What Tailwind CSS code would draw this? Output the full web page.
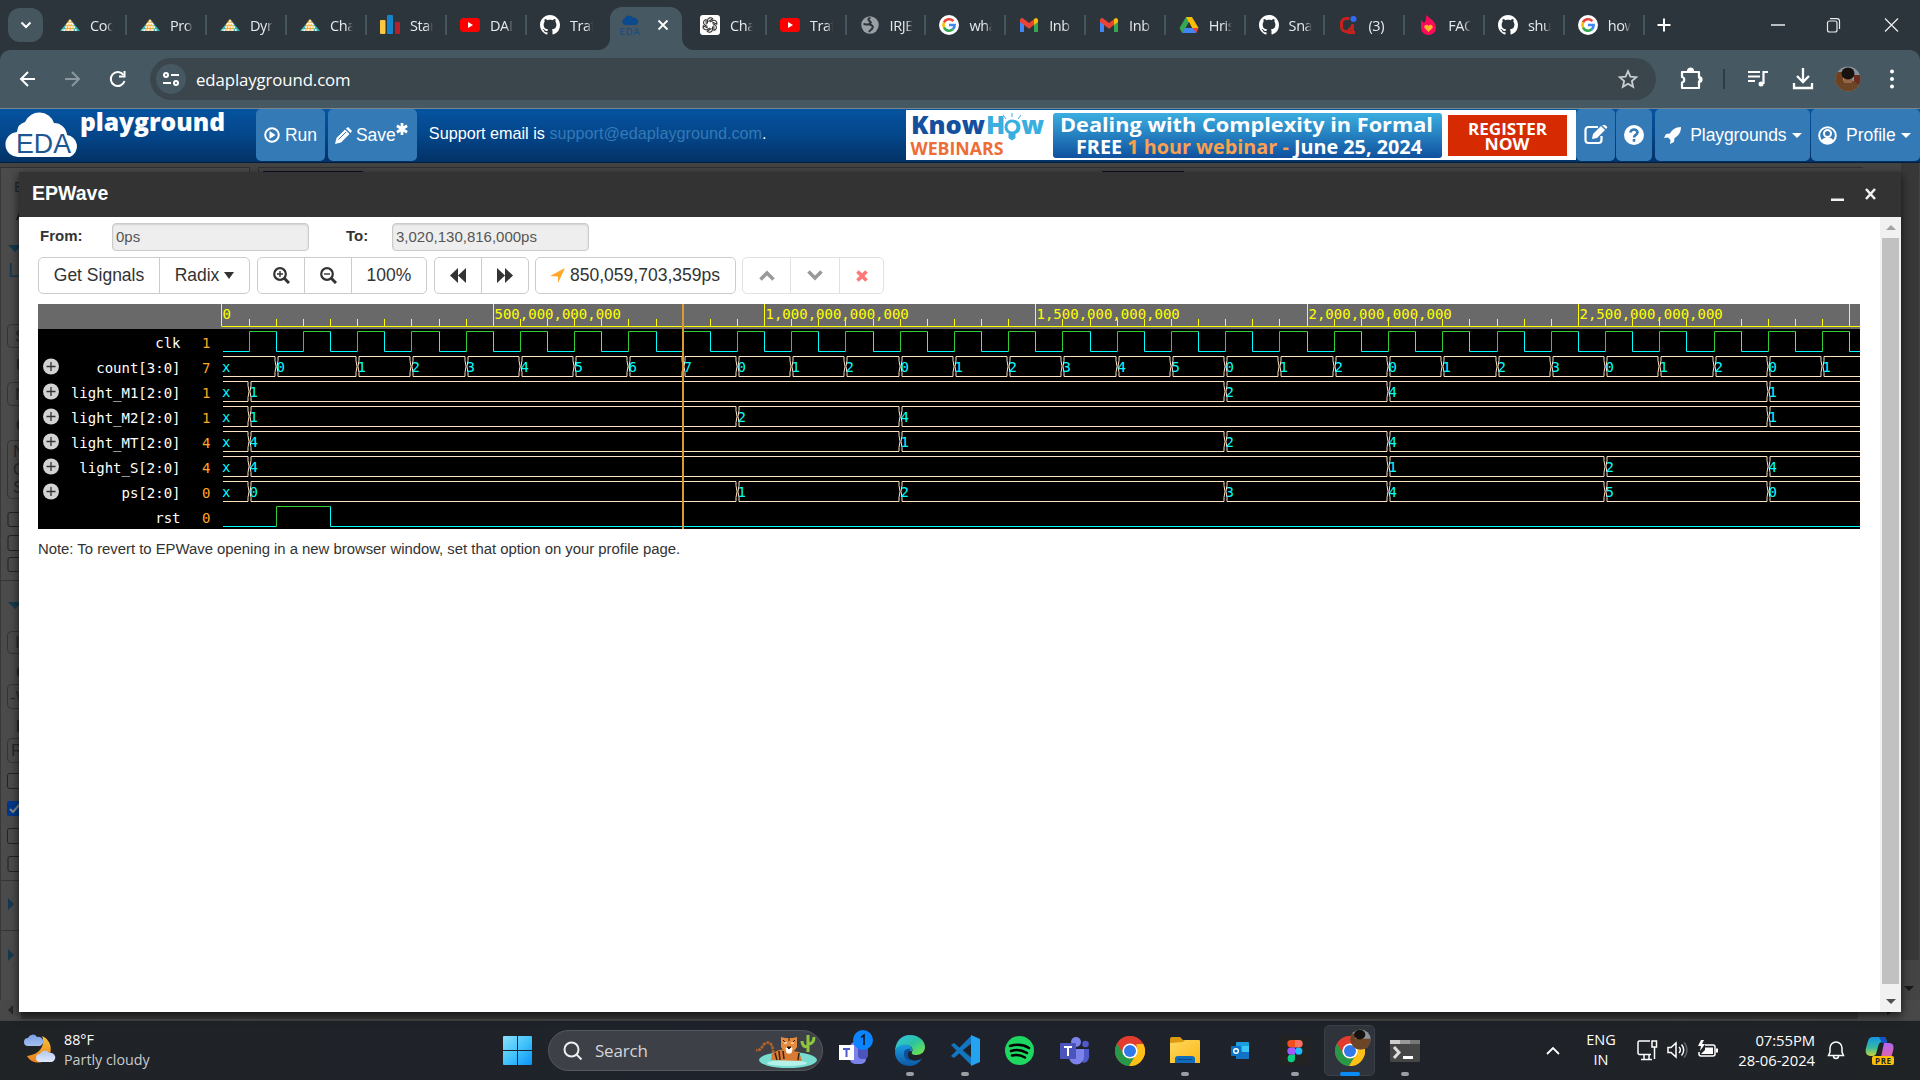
<!DOCTYPE html>
<html lang="en">
<head>
<meta charset="utf-8">
<title>EPWave - EDA Playground</title>
<script src="https://cdn.jsdelivr.net/npm/@tailwindcss/browser@4"></script>
</head>
<body class="w-[1920px] h-[1080px] overflow-hidden bg-[#444] font-['Liberation_Sans',Arial,sans-serif] flex flex-col">
<svg class="absolute" width="0" height="0">
  <defs>
    <linearGradient id="gEdge" x1="0" y1="0" x2="1" y2="1"><stop offset="0" stop-color="#35c1f1"/><stop offset=".5" stop-color="#2bc3a0"/><stop offset="1" stop-color="#7eea3c"/></linearGradient>
    <linearGradient id="gEdge2" x1="0" y1="0" x2="0" y2="1"><stop offset="0" stop-color="#1b9de2"/><stop offset="1" stop-color="#0c59a4"/></linearGradient>
    <linearGradient id="gWin" x1="0" y1="0" x2="1" y2="1"><stop offset="0" stop-color="#8be1fb"/><stop offset=".5" stop-color="#43c4fb"/><stop offset="1" stop-color="#0a93f8"/></linearGradient>
    <linearGradient id="gBan" x1="0" y1="0" x2="0" y2="1"><stop offset="0" stop-color="#3baee0"/><stop offset="1" stop-color="#0f519f"/></linearGradient>
    <linearGradient id="gMoon" x1="0" y1="0" x2="0" y2="1"><stop offset="0" stop-color="#f5c13a"/><stop offset="1" stop-color="#ef7f1a"/></linearGradient>
    <linearGradient id="gCloud" x1="0" y1="0" x2="0" y2="1"><stop offset="0" stop-color="#7ba0e6"/><stop offset="1" stop-color="#dde8fb"/></linearGradient>
    <linearGradient id="gFold" x1="0" y1="0" x2="1" y2="1"><stop offset="0" stop-color="#ffd75e"/><stop offset="1" stop-color="#fbb917"/></linearGradient>
    <linearGradient id="gCop1" x1="0" y1="0" x2="0" y2="1"><stop offset="0" stop-color="#1496e8"/><stop offset=".55" stop-color="#35b8a0"/><stop offset="1" stop-color="#c8d53a"/></linearGradient>
    <linearGradient id="gCop2" x1="0" y1="0" x2="0" y2="1"><stop offset="0" stop-color="#b366f0"/><stop offset="1" stop-color="#f0648c"/></linearGradient>
    <clipPath id="av"><circle cx="13" cy="13" r="12.500"/></clipPath>
    <symbol id="tri" viewBox="0 0 20 20"><path d="M10 4 L20 16 H0Z" fill="#35b8b0"/><path d="M10 4 L14 9 V16 H6 V9Z" fill="#f5b041"/><path d="M2 15h16M5 12h10M7.500 8.500h5M4 16l4-8M8 16l2-11M12 16l-2-11M16 16l-4-8" stroke="#fff" stroke-width="1.200" stroke-dasharray="2 1.200" fill="none"/></symbol>
    <symbol id="bars" viewBox="0 0 20 20"><rect x="0" y="5" width="5.500" height="14" rx="1" fill="#fbc740"/><rect x="7" y="0" width="6" height="19" rx="1" fill="#1684c9"/><rect x="15" y="7" width="5" height="12" rx="1" fill="#b51f2e"/></symbol>
    <symbol id="yt" viewBox="0 0 20 20"><rect y="3" width="20" height="14" rx="3.500" fill="#f00"/><path d="M8 7l5 3-5 3z" fill="#fff"/></symbol>
    <symbol id="gh" viewBox="0 0 16 16"><path fill="#fff" d="M8 0C3.580 0 0 3.580 0 8c0 3.540 2.290 6.530 5.470 7.590.4.070.55-.17.55-.38 0-.19-.01-.82-.01-1.490-2.010.37-2.530-.49-2.690-.94-.09-.23-.48-.94-.82-1.130-.28-.15-.68-.52-.01-.53.63-.01 1.080.58 1.230.82.72 1.210 1.870.87 2.330.66.07-.52.28-.87.51-1.070-1.780-.2-3.640-.89-3.640-3.950 0-.87.31-1.590.82-2.150-.08-.2-.36-1.020.08-2.120 0 0 .67-.21 2.200.82.64-.18 1.320-.27 2-.27s1.360.09 2 .27c1.530-1.040 2.200-.82 2.200-.82.44 1.100.16 1.920.08 2.120.51.56.82 1.270.82 2.150 0 3.070-1.870 3.750-3.650 3.950.29.25.54.73.54 1.480 0 1.070-.01 1.930-.01 2.200 0 .21.15.46.55.38A8.010 8.010 0 0 0 16 8c0-4.420-3.580-8-8-8z"/></symbol>
    <symbol id="eda" viewBox="0 0 20 20"><path d="M5 10a3.500 3.500 0 0 1 0-6.500A5 5 0 0 1 14 3a3.600 3.600 0 0 1 2 7z" fill="#0b4a8c"/><text x="0" y="19.500" font-size="9.500" fill="#0b4a8c" textLength="20">EDA</text></symbol>
    <symbol id="gpt" viewBox="0 0 20 20"><rect width="20" height="20" rx="3" fill="#fff"/><g fill="none" stroke="#333" stroke-width="1.100"><path id="pt" d="M7.500 8.500V5.500a3 3 0 0 1 5.300-1.700L8.500 6.500"/><use href="#pt" transform="rotate(60 10 10)"/><use href="#pt" transform="rotate(120 10 10)"/><use href="#pt" transform="rotate(180 10 10)"/><use href="#pt" transform="rotate(240 10 10)"/><use href="#pt" transform="rotate(300 10 10)"/></g></symbol>
    <symbol id="globe" viewBox="0 0 20 20"><circle cx="10" cy="10" r="8.700" fill="#9aa0a6"/><path d="M10.500 3c-3 .5-2.500 2.500-.5 3.500s0 2.500-2 3-3-.5-4.500-.5M9 9.500c3 .5 4.500 1.500 3.500 3.500S10 15 9 17" stroke="#2c353b" stroke-width="2" fill="none"/></symbol>
    <symbol id="goog" viewBox="0 0 20 20"><circle cx="10" cy="10" r="10" fill="#fff"/><g fill="none" stroke-width="2.600"><path d="M14.300 6.100A5.600 5.600 0 0 0 5 7.500" stroke="#ea4335"/><path d="M5 7.500a5.600 5.600 0 0 0 0 5" stroke="#fbbc05"/><path d="M5 12.500a5.600 5.600 0 0 0 8.800 1.800" stroke="#34a853"/><path d="M13.800 14.300A5.600 5.600 0 0 0 15.600 10H10" stroke="#4285f4"/></g></symbol>
    <symbol id="gmail" viewBox="0 0 20 20"><path d="M1 5v12h4V8z" fill="#4285f4"/><path d="M19 5v12h-4V8z" fill="#34a853"/><path d="M15 4.500V10l4-3V5a2 2 0 0 0-3.200-1.500z" fill="#fbbc04"/><path d="M1 5a2 2 0 0 1 3.200-1.500L10 8l5-3.700V10l-5 3.700L1 7z" fill="#ea4335"/></symbol>
    <symbol id="drive" viewBox="0 0 20 20"><path d="M7 2h6l-7 12-3 4L.5 13z" fill="#34a853"/><path d="M7 2h6l6.500 11H13z" fill="#fbbc04"/><path d="M6 13h13.500L17 18H3z" fill="#4285f4"/><path d="M14 13h5.500L17 18z" fill="#ea4335"/><path d="M10 7l3 6H7z" fill="#2c353b"/></symbol>
    <symbol id="qi" viewBox="0 0 20 20"><path d="M11.500 3.500H8A4.500 4.500 0 0 0 3.500 8v4A4.500 4.500 0 0 0 8 16.500h1" fill="none" stroke="#c5221f" stroke-width="3"/><path d="M14.500 9v9M9 17.500h8M14 12l-4 4" stroke="#c5221f" stroke-width="2.800"/><circle cx="15.500" cy="4" r="3" fill="#2f6df6"/></symbol>
    <symbol id="flame" viewBox="0 0 20 20"><path d="M8 0c5 4 10 7 10 13a7.500 7 0 0 1-15 0V5l3 3c2-2 2.500-5 2-8z" fill="#fb0a5a"/><path d="M10.500 17l-4-4a2 2 0 0 1 4-2 2 2 0 0 1 4 2z" fill="#fbb52a"/></symbol>
    <symbol id="chrome" viewBox="0 0 30 30"><circle cx="15" cy="15" r="15" fill="#ea4335"/><path d="M2 7.500A15 15 0 0 0 14 30l7-11z" fill="#279847"/><path d="M28 7.500A15 15 0 0 1 14 30l7.500-12.500V7.500z" fill="#fcc016"/><path d="M2 7.500L8.500 18 15 8H28A15 15 0 0 0 2 7.500z" fill="#e33b2e"/><circle cx="15" cy="15" r="7.600" fill="#fff"/><circle cx="15" cy="15" r="6" fill="#3178e8"/></symbol>
  </defs>
</svg>

<header class="h-[50px] shrink-0 bg-[#2c353b] flex items-center font-['Open_Sans','Noto_Sans',sans-serif] text-[14.500px] text-[#e6eaed]">
  <div class="ml-2 w-[35px] h-[34px] rounded-xl bg-[#46565f] grid place-items-center mr-1"><svg width="12" height="8" viewBox="0 0 12 8"><path d="M1.500 1.500L6 6l4.500-4.500" stroke="#fff" stroke-width="2" fill="none"/></svg></div>
  <div id="tabsLeft" class="flex w-[563px] shrink-0"></div>
  <div class="relative w-[72px] h-[50px] shrink-0 pt-[7px]">
    <div class="h-[43px] rounded-t-xl bg-[#465862] flex items-center pl-[9px] pb-[7px]"><svg width="21" height="20"><use href="#eda"/></svg><svg class="ml-[17px]" width="12" height="12" viewBox="0 0 12 12"><path d="M1.500 1.500l9 9m0-9l-9 9" stroke="#fff" stroke-width="1.800"/></svg></div>
    <svg class="absolute -left-3 bottom-0" width="12" height="12"><path d="M0 12A12 12 0 0 0 12 0V12z" fill="#465862"/></svg>
    <svg class="absolute -right-3 bottom-0" width="12" height="12"><path d="M12 12A12 12 0 0 1 0 0V12z" fill="#465862"/></svg>
  </div>
  <div id="tabsRight" class="flex ml-[5px] w-[957px] shrink-0"></div>
  <svg class="ml-3 shrink-0" width="16" height="16" viewBox="0 0 16 16"><path d="M8 1.500v13M1.500 8h13" stroke="#fff" stroke-width="2"/></svg>
  <svg class="ml-[99px] shrink-0" width="130" height="16" viewBox="0 0 130 16"><path d="M0 8h14M114 1.500l13 13m0-13l-13 13" stroke="#e8eaed" stroke-width="1.300" fill="none"/><rect x="56.500" y="4" width="9.500" height="11" rx="2" fill="none" stroke="#e8eaed" stroke-width="1.200"/><path d="M59 1.700h7a2.500 2.500 0 0 1 2.500 2.500V12" fill="none" stroke="#e8eaed" stroke-width="1.200"/></svg>
</header>

<div class="h-[59px] shrink-0 bg-[#2c353b]">
  <div class="h-[59px] bg-[#465862] rounded-t-[10px] border-b border-[#77858c] flex items-center text-white">
    <svg class="ml-4 shrink-0" width="134" height="24" viewBox="0 0 134 24" fill="none" stroke-width="2"><path d="M19 12H5m7-7l-7 7 7 7" stroke="#fff"/><path d="M49 12h14m-7-7l7 7-7 7" stroke="#8b989f"/><path d="M107.500 8A7 7 0 1 0 108.500 14" stroke="#fff"/><path d="M108.500 4v5.500H103" stroke="#fff"/></svg>
    <div class="w-[1506px] h-[42px] rounded-full bg-[#3a464c] flex items-center shrink-0">
      <div class="ml-[6px] size-[30px] rounded-full bg-[#465862] grid place-items-center"><svg width="16" height="16" viewBox="0 0 16 16" fill="none" stroke="#fff" stroke-width="2"><circle cx="3" cy="4" r="2"/><path d="M8 4h8M0 12h8"/><circle cx="13" cy="12" r="2"/></svg></div>
      <span class="ml-[10px] pt-px font-['Open_Sans','Noto_Sans',sans-serif] text-[16.800px] tracking-[-0.1px]">edaplayground.com</span>
      <svg class="ml-auto mr-[17px]" width="22" height="22" viewBox="0 0 24 24"><path d="M12 3.500l2.600 5.900 6.400.6-4.800 4.200 1.400 6.300L12 17.200l-5.600 3.300 1.400-6.300L3 10l6.400-.6z" fill="none" stroke="#c7cdd0" stroke-width="2"/></svg>
    </div>
    <svg class="ml-[22px] shrink-0" width="26" height="26" viewBox="0 0 26 26" fill="none" stroke="#fff" stroke-width="2.200"><path d="M4 6h17v5.500a2.500 2.500 0 0 1 0 4V22H4v-5.500a2.800 2.800 0 0 0 0-5.500z" stroke-linejoin="round"/><path d="M10 5a2.500 2.500 0 0 1 5 0M21 11a2.500 2.500 0 0 1 0 5" fill="#fff"/></svg>
    <div class="ml-[19px] w-[2px] h-5 bg-[#2f3c43]"></div>
    <svg class="ml-[22px] shrink-0" width="22" height="20" viewBox="0 0 22 20" stroke="#fff" stroke-width="2.200" fill="none"><path d="M1 3h12M1 7.500h12M1 12h7M16.500 15V3h4.500"/><circle cx="14" cy="15" r="2.500" fill="#fff" stroke="none"/></svg>
    <svg class="ml-[23px] shrink-0" width="22" height="22" viewBox="0 0 22 22" stroke="#fff" stroke-width="2.300" fill="none"><path d="M11 0v13M5 8l6 6 6-6M2 15v5h18v-5"/></svg>
    <svg class="ml-[21px] shrink-0" width="26" height="26" viewBox="0 0 26 26"><g clip-path="url(#av)"><rect width="26" height="26" fill="#8d9298"/><path d="M0 6h8v14H0z" fill="#70411f"/><path d="M19 9h7v10h-7z" fill="#6a2d20"/><path d="M1 26c0-8 5-12 12-12s12 4 12 12z" fill="#6b4526"/><path d="M9 12h8v5H9z" fill="#96664a"/><ellipse cx="13" cy="7.500" rx="6.500" ry="6" fill="#17120f"/></g></svg>
    <svg class="ml-[28px] shrink-0" width="6" height="20" viewBox="0 0 6 20" fill="#fff"><circle cx="3" cy="2.500" r="2"/><circle cx="3" cy="10" r="2"/><circle cx="3" cy="17.500" r="2"/></svg>
  </div>
</div>

<nav class="h-[54px] shrink-0 bg-linear-to-b from-[#0553a0] via-[#04468a] to-[#033266] border-b border-[#021f40] flex text-[17.500px] text-white">
  <svg class="shrink-0" width="256" height="52" viewBox="0 0 256 52"><path d="M19 48a12.500 12.500 0 0 1-2-25 11 11 0 0 1 8-10A15.500 15.500 0 0 1 54 14a13 13 0 0 1 13 12 11.500 11.500 0 0 1 3 22z" fill="#fff"/><text x="16" y="43.500" font-size="28" fill="#1c5793" textLength="55" lengthAdjust="spacingAndGlyphs">EDA</text><text x="80" y="21.500" font-size="24" font-weight="800" font-family="Open Sans" fill="#fff" textLength="145" lengthAdjust="spacingAndGlyphs">playground</text></svg>
  <div class="h-[52px] w-[69px] rounded-[5px] bg-[#337ab7] flex items-center justify-center gap-[5px]"><svg width="16" height="16" viewBox="0 0 16 16"><circle cx="8" cy="8" r="6.800" fill="none" stroke="#fff" stroke-width="2"/><path d="M5.500 4v8l6-4z" fill="#fff"/></svg><span>Run</span></div>
  <div class="h-[52px] w-[89px] ml-[3px] rounded-[5px] bg-[#337ab7] flex items-center justify-center relative pr-[14px]"><svg class="mr-1" width="17" height="17" viewBox="0 0 17 17"><path d="M0 17l1.500-6L10 2.500 14.500 7 6 15.500zM11 1.500l2-1.500L17 4l-1.500 2z" fill="#fff"/><path d="M3.500 12.500L11 5" stroke="#337ab7" stroke-width="1"/></svg><span>Save</span><svg class="absolute right-[9px] top-[14px]" width="12" height="12" viewBox="0 0 13 13"><path d="M6.500 0v13M1 3l11 7M12 3L1 10" stroke="#fff" stroke-width="3"/></svg></div>
  <div class="pt-[13px] ml-3 text-[16.200px] w-[478px] leading-[22px] whitespace-nowrap">Support email is <span class="text-[#337ab7]">support@edaplayground.com</span>.</div>
  <svg class="mt-px shrink-0" width="670" height="50" viewBox="907 110 670 50" font-family="Open Sans" font-weight="700"><rect x="907" y="110" width="670" height="50" fill="#fff"/><g font-size="24" font-weight="800"><text x="912" y="134" fill="#14509d" textLength="74" lengthAdjust="spacingAndGlyphs">Know</text><text x="987" y="134" fill="#3baee0" textLength="58" lengthAdjust="spacingAndGlyphs">How</text></g><circle cx="1013" cy="127" r="6" fill="#fff" stroke="#3baee0" stroke-width="3"/><path d="M1010 134h6v4l-3 2-3-2zM1013 117v-4M1007 119l-3-4M1019 119l3-4" fill="#3baee0" stroke="#3baee0"/><text x="911.500" y="155" font-size="17.500" fill="#ee6c36" textLength="93" lengthAdjust="spacingAndGlyphs">WEBINARS</text>
    <rect x="1054" y="113" width="389" height="45" rx="3" fill="url(#gBan)"/><text x="1061" y="132" font-size="20" fill="#fff" textLength="373" lengthAdjust="spacingAndGlyphs">Dealing with Complexity in Formal</text><text x="1077" y="153.500" font-size="19.500" fill="#fff" textLength="346" lengthAdjust="spacingAndGlyphs">FREE <tspan fill="#fba04e">1 hour webinar - </tspan>June 25, 2024</text><rect x="1449" y="115" width="119" height="41" fill="#d62a02"/><g fill="#fff" font-size="16"><text x="1469" y="134.500" textLength="79" lengthAdjust="spacingAndGlyphs">REGISTER</text><text x="1485.500" y="149.500" textLength="45" lengthAdjust="spacingAndGlyphs">NOW</text></g></svg>
  <div class="h-[52px] w-[39px] rounded-[5px] bg-[#337ab7] grid place-items-center"><svg width="24" height="20" viewBox="0 0 24 20"><path d="M14 2H4.500A3 3 0 0 0 1.500 5v10a3 3 0 0 0 3 3h10a3 3 0 0 0 3-3v-4" fill="none" stroke="#fff" stroke-width="2.200"/><path d="M8 14l1-5 8-8 4 4-8 8zM18 0l4 4 1.500-1.800L20-1z" fill="#fff"/></svg></div>
  <div class="h-[52px] ml-px w-[36px] rounded-[5px] bg-[#337ab7] grid place-items-center"><svg width="20" height="20" viewBox="0 0 20 20"><circle cx="10" cy="10" r="10" fill="#fff"/><path d="M6.500 7.500C6.500 3.500 13.500 3.500 13.500 7.500c0 2.500-3.500 2.300-3.500 5M10 14v2.700" stroke="#337ab7" stroke-width="2.600" fill="none"/></svg></div>
  <div class="h-[52px] ml-[3px] w-[155px] rounded-[5px] bg-[#337ab7] flex items-center pl-[9px]"><svg width="17" height="17" viewBox="0 0 17 17"><path d="M17 0c-6 0-9 3-11 6.500L2 7 0 11l4-.5 2.500 2.500L6 17l4-2 .5-4C14 9 17 6 17 0z" fill="#fff"/></svg><span class="ml-[9px] tracking-[-.1px]">Playgrounds</span><span class="ml-[6px] border-x-[5px] border-x-transparent border-t-[5px] border-t-white"></span></div>
  <div class="h-[52px] ml-px w-[109px] rounded-[5px] bg-[#337ab7] flex items-center pl-[7px]"><svg width="19" height="19" viewBox="0 0 19 19"><circle cx="9.500" cy="9.500" r="8.300" fill="none" stroke="#fff" stroke-width="2"/><circle cx="9.500" cy="7.500" r="3.500" fill="none" stroke="#fff" stroke-width="2"/><path d="M3.500 15c1-3 3-3.500 6-3.500s5 .5 6 3.500l-3 2.500h-6z" fill="#fff"/></svg><span class="ml-[9px]">Profile</span><span class="ml-[5px] border-x-[5px] border-x-transparent border-t-[5px] border-t-white"></span></div>
</nav>

<main class="relative h-[858px] shrink-0 bg-[#444]">
  <svg class="block" width="1920" height="858" viewBox="0 163 1920 858" font-size="17">
    <path d="M0 167.500H249.500V180M258.500 180V167.500H1863" fill="none" stroke="#303030"/><rect x="1" y="168" width="248" height="834" fill="#4b4b4b"/><rect x="0" y="168" width="1" height="834" fill="#383838"/>
    <rect x="263" y="171" width="100" height="3" fill="#0c0f25"/><rect x="1102" y="171" width="82" height="3" fill="#0c0f25"/>
    <g fill="#16394e"><path d="M8 245h14l-7 7zM8 602h14l-7 7zM8 898l6 6-6 6zM8 949l6 6-6 6z"/></g>
    <g fill="#24282b"><text x="14" y="192" font-size="15">E</text><text x="16" y="220" font-size="15" fill="#0c0f25">A</text><text x="8" y="277" font-size="20" fill="#16394e">L</text><text x="15" y="342">S</text><text x="16" y="371" font-weight="bold">U</text><text x="15" y="400">N</text><text x="16" y="431" font-weight="bold">C</text><text x="13" y="457">N</text><text x="13" y="475">O</text><text x="13" y="493">S</text><text x="15" y="648">I</text><text x="16" y="678" font-weight="bold">C</text><text x="10" y="703">-W</text><text x="16" y="732" font-weight="bold">R</text><text x="11" y="756">R</text></g>
    <g fill="none" stroke="#353535"><rect x="7.500" y="324.500" width="40" height="23" rx="4"/><rect x="7.500" y="382.500" width="40" height="23" rx="4"/><rect x="7.500" y="440.500" width="40" height="58" rx="4"/><rect x="7.500" y="631.500" width="40" height="22" rx="4"/><rect x="7.500" y="684.500" width="40" height="24" rx="4"/><rect x="7.500" y="738.500" width="40" height="24" rx="4"/><path d="M1 580.500h20M1 880.500h20M1 930.500h20"/></g>
    <g fill="none" stroke="#232323"><rect x="8" y="512.500" width="15" height="14" rx="2"/><rect x="8" y="535.500" width="15" height="15" rx="2"/><rect x="8" y="557.500" width="15" height="14" rx="2"/><rect x="7.500" y="773.500" width="15" height="15" rx="2"/><rect x="7.500" y="828.500" width="15" height="15" rx="2"/><rect x="8" y="856.500" width="15" height="15" rx="2"/></g>
    <rect x="7" y="801" width="15" height="15" rx="2" fill="#00388a"/><path d="M10 809l3 3 7-8" stroke="#888" stroke-width="2" fill="none"/>
    <rect x="0" y="1000" width="1920" height="20" fill="#484848"/><rect x="21" y="1000" width="1837" height="19" fill="#383838"/><path d="M13 1005v10l-5-5z" fill="#262626"/>
    <rect x="1901" y="163" width="18" height="797" fill="#383838"/><path d="M1904 986h10l-5 5zM1887 1012l4 0-4 3z" fill="#181818"/>
  </svg>

  <section class="absolute left-[19px] top-[9px] w-[1882px] h-[840px] bg-white shadow-[0_3px_9px_rgba(0,0,0,.7)] flex flex-col text-[#333]">
    <div class="h-[45px] shrink-0 bg-[#333] flex items-center text-white pl-[13px] pb-px"><h1 class="font-bold text-[19.500px]">EPWave</h1>
      <svg class="ml-auto mr-[23px]" width="49" height="14" viewBox="0 0 49 14"><path d="M2 12.700h13M37 2l9 10M46 2L37 12" stroke="#f2f2f2" stroke-width="2.600"/></svg></div>
    <div class="flex grow min-h-0">
      <div class="w-[1861px] pl-[19px] pt-[6px]">
        <div class="flex items-center text-[15px] h-7"><b class="w-[74px] pl-[2px] pb-[2px]">From:</b><span class="w-[197px] h-7 rounded-[4px] border border-[#ccc] bg-[#eee] text-[#555] pl-[3px] leading-[25px] shadow-[inset_0_1px_2px_rgba(0,0,0,.12)]">0ps</span><b class="ml-[37px] w-[46px] pb-[2px]">To:</b><span class="w-[197px] h-7 rounded-[4px] border border-[#ccc] bg-[#eee] text-[#555] pl-[3px] leading-[25px] shadow-[inset_0_1px_2px_rgba(0,0,0,.12)]">3,020,130,816,000ps</span></div>
        <div class="flex mt-[6px] h-[37px] text-[17.500px]">
          <div class="flex w-[212px] rounded-[5px] border border-[#ccc] divide-x divide-[#ccc]"><div class="w-[121px] grid place-items-center">Get Signals</div><div class="grow flex items-center justify-center gap-[5px]">Radix<span class="border-x-[5.500px] border-x-transparent border-t-[7px] border-t-[#333]"></span></div></div>
          <div class="flex w-[170px] ml-[7px] rounded-[5px] border border-[#ccc] divide-x divide-[#ccc]"><div class="w-[47px] grid place-items-center"><svg width="17" height="17" viewBox="0 0 17 17" fill="none" stroke="#333"><circle cx="7" cy="7" r="5.800" stroke-width="2.200"/><path d="M11 11l5 5" stroke-width="3"/><path d="M4 7h6M7 4v6" stroke-width="1.400"/></svg></div><div class="w-[47px] grid place-items-center"><svg width="17" height="17" viewBox="0 0 17 17" fill="none" stroke="#333"><circle cx="7" cy="7" r="5.800" stroke-width="2.200"/><path d="M11 11l5 5" stroke-width="3"/><path d="M4 7h6" stroke-width="1.400"/></svg></div><div class="grow grid place-items-center">100%</div></div>
          <div class="flex w-[95px] ml-[7px] rounded-[5px] border border-[#ccc] divide-x divide-[#ccc]"><div class="w-[47px] grid place-items-center"><svg width="16" height="15" viewBox="0 0 16 15"><path d="M8 0v15L0 7.500zM16 0v15L8 7.500z" fill="#333"/></svg></div><div class="grow grid place-items-center"><svg width="16" height="15" viewBox="0 0 16 15"><path d="M8 0v15l8-7.500zM0 0v15l8-7.500z" fill="#333"/></svg></div></div>
          <div class="flex w-[201px] ml-[6px] rounded-[5px] border border-[#ccc] items-center justify-center gap-[5px] pr-px"><svg width="15" height="15" viewBox="0 0 15 15"><path d="M15 0L8 15V8.500L0 8z" fill="#ffa726"/></svg>850,059,703,359ps</div>
          <div class="flex w-[142px] ml-[6px] rounded-[5px] border border-[#e2e2e2] divide-x divide-[#e2e2e2]"><div class="w-[48px] grid place-items-center"><svg width="16" height="11" viewBox="0 0 16 11"><path d="M1.500 9.500L8 3l6.500 6.500" stroke="#999" stroke-width="3.500" fill="none"/></svg></div><div class="w-[49px] grid place-items-center"><svg width="16" height="11" viewBox="0 0 16 11"><path d="M1.500 1.500L8 8l6.500-6.500" stroke="#999" stroke-width="3.500" fill="none"/></svg></div><div class="grow grid place-items-center"><svg width="12" height="12" viewBox="0 0 12 12"><path d="M1.500 1.500l9 9m0-9l-9 9" stroke="#ff7777" stroke-width="3.600"/></svg></div></div>
        </div>
        <svg id="wave" class="block mt-[10px] bg-black" width="1822" height="225" viewBox="38 304 1822 225" font-family="DejaVu Sans Mono" font-size="14"></svg>
        <p class="mt-[11px] text-[14.900px] leading-[18px] tracking-[-.02px]">Note: To revert to EPWave opening in a new browser window, set that option on your profile page.</p>
      </div>
      <div class="w-[21px] bg-[#f1f1f1] flex flex-col items-center py-[8px]"><span class="border-x-[5px] border-x-transparent border-b-[5px] border-b-[#a3a3a3]"></span><div class="mt-2 w-[17px] h-[746px] bg-[#c1c1c1]"></div><span class="mt-auto border-x-[5px] border-x-transparent border-t-[5px] border-t-[#505050]"></span></div>
    </div>
  </section>
</main>

<footer class="h-[59px] shrink-0 bg-linear-to-r from-[#202326] via-[#1e222c] to-[#202326] flex items-center text-white font-['Open_Sans','Noto_Sans',sans-serif]">
  <svg class="ml-6 mb-1 shrink-0" width="32" height="30" viewBox="0 0 32 30"><path d="M18 2c3 6 1 18-15 20 2 4 7 7 12 6.500C28 28 32 8 18 2z" fill="url(#gMoon)"/><path d="M4 12a4 4 0 0 1 0-8 5 5 0 0 1 9-1 4 4 0 0 1 3 9zM16 28a4 4 0 0 1 0-8 5 5 0 0 1 9-1 4.500 4.500 0 0 1 3 9z" fill="url(#gCloud)"/></svg>
  <div class="ml-2 pb-[2px] w-[439px] shrink-0 text-[14.300px] leading-5"><div>88°F</div><div class="text-[#c8cacd]">Partly cloudy</div></div>
  <svg class="shrink-0" width="29" height="29" viewBox="0 0 29 29"><path d="M1 0h13v14H0V1a1 1 0 0 1 1-1zM15 0h13a1 1 0 0 1 1 1v13H15zM0 15h14v14H1a1 1 0 0 1-1-1zM15 15h14v13a1 1 0 0 1-1 1H15z" fill="url(#gWin)"/></svg>
  <div class="ml-4 w-[275px] h-[41px] shrink-0 rounded-full bg-[#3d4046] border border-[#55585d] flex items-center pl-[14px] pr-1">
    <svg width="20" height="20" viewBox="0 0 20 20" fill="none" stroke="#eee" stroke-width="2"><circle cx="8.500" cy="8.500" r="7"/><path d="M13.500 13.500l5 5"/></svg>
    <span class="ml-3 text-[17px] text-[#d4d5d7] tracking-[-.2px]">Search</span>
    <svg class="ml-auto" width="64" height="36" viewBox="0 0 64 36"><ellipse cx="34" cy="27" rx="29" ry="8" fill="#79dcd0"/><ellipse cx="33" cy="30" rx="20" ry="3" fill="#b5f1e8"/><path d="M19 24C20 14 17 8 12 10S9 18 2 17" fill="none" stroke="#b4622b" stroke-width="2.600" stroke-dasharray="3 .8"/><path d="M17 27c1-8 8-12 16-10l12 2 3 9z" fill="#d97b35"/><path d="M21 20l2 7M25 18l1 9M29 18l1 8M45 20l-1 7" stroke="#3d2212" stroke-width="1.500"/><path d="M27 4l4 1h8l4-1v10c-3 7-13 7-16 0z" fill="#e58b3d"/><path d="M32 15h6l-1 5h-4zM30 10h3M37 10h3" stroke="#fff" fill="#fff"/><path d="M33 14h4l-2 2zM35 4v4M29 7l2 2M41 7l-2 2" stroke="#2a1a10" fill="#2a1a10"/><path d="M54 19V2M54 14c-5 0-6-3-6-6M54 11c5 0 6-3 6-7" stroke="#8dc63f" stroke-width="3" fill="none"/></svg>
  </div>
  <div class="flex items-center ml-1 shrink-0">
    <div class="relative w-[55px] h-[55px] grid place-items-center"><svg class="ml-0.5 -mt-1.5" width="36" height="36" viewBox="0 0 36 36"><rect x="12" y="12" width="16" height="22" rx="5" fill="#7b83eb"/><rect x="20" y="16" width="10" height="13" rx="4" fill="#4b53bc"/><rect x="1" y="15" width="15" height="15" fill="#fff"/><path d="M5 19h7M8.500 19v8" stroke="#5059c9" stroke-width="2"/><circle cx="25" cy="10" r="10" fill="#0a84ff"/><path d="M23 7.500l3-2.500v10" stroke="#111" stroke-width="1.500" fill="none"/></svg></div>
    <div class="relative w-[55px] h-[55px] grid place-items-center"><svg width="30" height="31" viewBox="0 0 30 31"><path d="M0 17C0 7 6 0 15 0c9 0 15 6 15 12 0 5-4 8-9 8-3 0-5-1-4-3 2-4-2-7-6-7C5 10 1 13 0 17z" fill="url(#gEdge)"/><path d="M0 17C1 12 6 9 11 9.500c4 .5 7 3.500 6 7-5-2-6 3-4 6 3 4 9 4 14 1-3 5-8 7.500-12 7.500C6 31 0 25 0 17z" fill="url(#gEdge2)"/><path d="M9 18c0-3 3-5 7-4-3 2-5 8 0 12-4 0-8-4-7-8z" fill="#0b4f9c"/></svg><i class="absolute bottom-0.5 w-2 h-1 rounded-full bg-[#9a9da2]"></i></div>
    <div class="relative w-[55px] h-[55px] grid place-items-center"><svg width="30" height="31" viewBox="0 0 30 31"><path d="M1 21l20-20 4 4L4 23zM1 10l3-2 21 18-4 4z" fill="#1276c0"/><path d="M21 0l9 4v23l-9 4V22l-8-7 8-6z" fill="#24a4f0"/><path d="M21 9v13l-8-7z" fill="#1d2129"/></svg><i class="absolute bottom-0.5 w-2 h-1 rounded-full bg-[#9a9da2]"></i></div>
    <div class="relative w-[55px] h-[55px] grid place-items-center"><svg width="29" height="29" viewBox="0 0 29 29"><circle cx="14.500" cy="14.500" r="14.500" fill="#1ed760"/><path d="M5 10c7-2 14-1 19 2M6 15c6-2 11-1 16 2M7 19.500c5-1 9-.5 13 2" stroke="#000" stroke-width="2.500" fill="none" stroke-linecap="round"/></svg></div>
    <div class="relative w-[55px] h-[55px] grid place-items-center"><svg width="30" height="28" viewBox="0 0 30 28"><circle cx="16" cy="5" r="5" fill="#7b83eb"/><circle cx="25.500" cy="7" r="3.300" fill="#5059c9"/><path d="M19 12h10v8a6 6 0 0 1-6 6z" fill="#5059c9"/><path d="M9 12h15v8a7.500 7.500 0 0 1-15 0z" fill="#7b83eb"/><rect y="6" width="16" height="16" rx="1" fill="#4b53bc"/><path d="M4 10h8M8 10v9" stroke="#fff" stroke-width="2"/></svg></div>
    <div class="relative w-[55px] h-[55px] grid place-items-center"><svg width="30" height="30"><use href="#chrome"/></svg></div>
    <div class="relative w-[55px] h-[55px] grid place-items-center"><svg width="30" height="27" viewBox="0 0 30 27"><path d="M0 2a2 2 0 0 1 2-2h8l3 3h16v8H0z" fill="#dc9a10"/><path d="M0 6l13-1 2-2h14a1 1 0 0 1 1 1v22H0z" fill="url(#gFold)"/><path d="M5 26v-4a3 3 0 0 1 3-3h14a3 3 0 0 1 3 3v4z" fill="#0f6cbd"/><path d="M8 22.500h14" stroke="#0a4a85"/></svg><i class="absolute bottom-0.5 w-2 h-1 rounded-full bg-[#9a9da2]"></i></div>
    <div class="relative w-[55px] h-[55px] grid place-items-center"><svg width="18" height="18" viewBox="0 0 18 18"><rect x="5" y="0" width="13" height="17" rx="1" fill="#1b9de2"/><path d="M5 9h13v8H5z" fill="#1272c4"/><path d="M11 4h7v6h-7z" fill="#39c6f5"/><rect y="4" width="10" height="10" rx="1" fill="#0c72c8"/><circle cx="5" cy="9" r="2.300" fill="none" stroke="#fff" stroke-width="1.400"/></svg></div>
    <div class="relative w-[55px] h-[55px] grid place-items-center"><svg width="30" height="30" viewBox="0 0 30 30"><rect width="30" height="30" rx="2" fill="#232323"/><path d="M15 4h-4a3.700 3.700 0 0 0 0 7.400h4z" fill="#f24e1e"/><path d="M15 4h4a3.700 3.700 0 0 1 0 7.400h-4z" fill="#ff7262"/><path d="M15 11.400h-4a3.700 3.700 0 0 0 0 7.400h4z" fill="#a259ff"/><circle cx="18.700" cy="15.100" r="3.700" fill="#1abcfe"/><path d="M15 18.800h-4a3.700 3.700 0 1 0 4 3.700z" fill="#0acf83"/></svg><i class="absolute bottom-0.5 w-2 h-1 rounded-full bg-[#9a9da2]"></i></div>
    <div class="relative w-[55px] h-[55px] grid place-items-center"><div class="absolute inset-[2px] rounded-[5px] bg-[#2f333c] border border-[#3b3f47]"></div><svg class="relative" width="30" height="30"><use href="#chrome"/></svg><svg class="absolute right-[6px] top-[6px]" width="21" height="21" viewBox="0 0 26 26"><g clip-path="url(#av)"><rect width="26" height="26" fill="#8d9298"/><path d="M0 12h26v14H0z" fill="#6b4526"/><path d="M0 6h6v10H0z" fill="#70411f"/><ellipse cx="12" cy="7" rx="7" ry="6" fill="#17120f"/></g></svg><i class="absolute bottom-0.5 w-5 h-1 rounded-full bg-[#0a8bf5]"></i></div>
    <div class="relative w-[55px] h-[55px] grid place-items-center"><svg width="30" height="22" viewBox="0 0 30 22"><rect width="30" height="22" rx="1.500" fill="#464646"/><path d="M0 0h10v4H0z" fill="#ccc"/><path d="M10 0h10v4H10z" fill="#999"/><path d="M20 0h10v4H20z" fill="#777"/><path d="M4 7l5 5.500L4 18" stroke="#ddd" stroke-width="3" fill="none"/><path d="M13 17.500h10" stroke="#fff" stroke-width="3"/></svg><i class="absolute bottom-0.5 w-2 h-1 rounded-full bg-[#9a9da2]"></i></div>
  </div>
  <svg class="ml-[114px] shrink-0" width="14" height="8" viewBox="0 0 14 8"><path d="M1 7l6-6 6 6" stroke="#fff" stroke-width="1.800" fill="none"/></svg>
  <div class="ml-[22px] pb-px w-[38px] shrink-0 text-center text-[14.500px] leading-5">ENG<br>IN</div>
  <svg class="ml-[17px] mb-[2px] shrink-0" width="82" height="22" viewBox="0 0 82 22" fill="none" stroke="#fff" stroke-width="1.500"><path d="M13 2H2.500A1.500 1.500 0 0 0 1 3.500V14a1.500 1.500 0 0 0 1.500 1.500H14M7 16v4M12 16v4M4 20.500h11M17.500 8v12"/><rect x="15" y="2" width="4.500" height="6"/><path d="M31 8.500h3l5-4.500v14l-5-4.500h-3zM42 8a4 4 0 0 1 0 6M44.500 5.500a8 8 0 0 1 0 11"/><path d="M47 3.500a11 11 0 0 1 0 15" stroke="#5b6068"/><path d="M68 6h8a2 2 0 0 1 2 2v7a2 2 0 0 1-2 2H64a2 2 0 0 1-2-2v-2"/><path d="M68 8.500h8v6.500H64l4-4zM79 9.500h2v4h-2z" fill="#fff" stroke="none"/><path d="M64 1l-3 6h3l-1 5 5-7h-3l2-4z" fill="#fff" stroke="none"/></svg>
  <div class="w-[96px] pb-[2px] shrink-0 text-right text-[14.800px] leading-5 tracking-[-.05px]">07:55PM<br>28-06-2024</div>
  <svg class="ml-[12px] mb-[2px] shrink-0" width="18" height="20" viewBox="0 0 18 20" fill="none" stroke="#fff" stroke-width="1.500"><path d="M1.500 15.500h15l-1.500-3.500V8A6 6 0 0 0 3 8v4zM6.500 16a2.500 2.500 0 0 0 5 0"/></svg>
  <svg class="ml-[20px] shrink-0" width="30" height="30" viewBox="0 0 30 30"><path d="M8 1h10c3 0 3 2 4 5h-4c-3 0-4 1-5 5l-2 7c-1 2-3 2-5 2-5 0-6-4-5-8l2-7c1-3 2-4 5-4z" fill="url(#gCop1)"/><path d="M14 1h4c3 0 3 2 4 6h-5z" fill="#1751c8"/><path d="M19 7h5c5 0 5 4 4 8l-2 7c-1 3-3 5-6 5h-8c2 0 3-3 4-6z" fill="url(#gCop2)"/><rect x="7" y="20" width="22" height="9" rx="2" fill="#fdbe0a"/><text x="10" y="27.500" font-size="8" font-weight="700" fill="#222" textLength="16">PRE</text></svg>
</footer>

<script>
// Browser tabs: [icon, label]
const tab = ([icon, label], w) => `<div class="flex items-center shrink-0" style="width:${w}px"><svg class="ml-[13px] shrink-0" width="20" height="20"><use href="#${icon}"/></svg><span class="ml-[10px] w-[23px] pt-px overflow-hidden whitespace-nowrap tracking-[-.4px] mask-r-from-70%">${label}</span><span class="ml-auto w-[2px] h-5 bg-[#46565f]"></span></div>`;
const left = [['tri','Cod'],['tri','Prob'],['tri','Dyn'],['tri','Cha'],['bars','Star'],['yt','DAD'],['gh','Traf']];
const right = [['gpt','Cha'],['yt','Traf'],['globe','IRJE'],['goog','wha'],['gmail','Inb'],['gmail','Inb'],['drive','Hris'],['gh','Sna'],['qi','(3)'],['flame','FAQ'],['gh','shu'],['goog','how']];
document.getElementById('tabsLeft').innerHTML = left.map(t => tab(t, 80)).join('');
document.getElementById('tabsRight').innerHTML = right.map(t => tab(t, 79.800)).join('');
document.getElementById('tabsLeft').lastElementChild.lastElementChild.style.visibility = 'hidden';

// Waveform viewer; times are in units of 10^9 ps
const X = t => Math.round(221.5 + t * 0.54256) + 0.5, END = 1860;
const line = (d, c, w = 1) => `<path d="${d}" stroke="${c}" stroke-width="${w}" fill="none"/>`;
const text = (x, y, s, c, a = 'start') => `<text x="${x}" y="${y}" fill="${c}" text-anchor="${a}">${s}</text>`;
let out = '<rect x="38" y="304" width="1822" height="25" fill="#696969"/>' + line(`M221.500 326.500H${END}`, '#ff0');
for (let t = 0; t <= 3000; t += 50) {
  const major = t % 500 === 0;
  out += line(`M${X(t) - (t ? 0 : 1)} ${major ? 304 : 319}V326`, '#ff0');
  if (major && t < 3000) out += text(X(t) + (t ? 1 : 0), 319, t ? t.toLocaleString('en-US') + ',000,000,000' : '0', '#ff0');
}
const rows = [
  ['clk', 1, null],
  ['count[3:0]', 7, [[0,'x'],[100,0],[250,1],[350,2],[450,3],[550,4],[650,5],[750,6],[850,7],[950,0],[1050,1],[1150,2],[1250,0],[1350,1],[1450,2],[1550,3],[1650,4],[1750,5],[1850,0],[1950,1],[2050,2],[2150,0],[2250,1],[2350,2],[2450,3],[2550,0],[2650,1],[2750,2],[2850,0],[2950,1]]],
  ['light_M1[2:0]', 1, [[0,'x'],[50,1],[1850,2],[2150,4],[2850,1]]],
  ['light_M2[2:0]', 1, [[0,'x'],[50,1],[950,2],[1250,4],[2850,1]]],
  ['light_MT[2:0]', 4, [[0,'x'],[50,4],[1250,1],[1850,2],[2150,4]]],
  ['light_S[2:0]', 4, [[0,'x'],[50,4],[2150,1],[2550,2],[2850,4]]],
  ['ps[2:0]', 0, [[0,'x'],[50,0],[950,1],[1250,2],[1850,3],[2150,4],[2550,5],[2850,0]]],
  ['rst', 0, null],
];
const bit = (edges, hi, lo) => {
  let s = '', x = 223, level = 0;
  for (const t of [...edges, null]) {
    const nx = t === null ? END : X(t);
    s += line(`M${x} ${level ? hi : lo}H${nx}`, level ? '#32cd32' : '#0ff');
    if (t !== null) { level = 1 - level; s += line(`M${nx} ${hi}V${lo}`, level ? '#32cd32' : '#0ff'); }
    x = nx;
  }
  return s;
};
rows.forEach(([name, val, vals], i) => {
  const top = 329 + 25 * i, hi = top + 2.500, lo = top + 22.500, m = top + 12.500;
  out += text(180.500, top + 19, name, '#fff', 'end') + text(210.500, top + 19, val, '#ffa726', 'end');
  if (vals) {
    out += `<circle cx="51" cy="${m}" r="8" fill="#d3d3d3"/>` + line(`M46.500 ${m}h9M51 ${m - 4.500}v9`, '#333', 1.300);
    vals.forEach(([t, v], k) => {
      const a = k ? X(t) + 1.500 : 223, b = vals[k + 1] ? X(vals[k + 1][0]) - 1.500 : END;
      let d = `M${a} ${hi}H${b}M${a} ${lo}H${b}`;
      if (k) d += `M${a} ${hi}V${hi + 4}L${a - 1} ${m}L${a} ${lo - 4}V${lo}`;
      if (vals[k + 1]) d += `M${b} ${hi}V${hi + 4}L${b + 1} ${m}L${b} ${lo - 4}V${lo}`;
      out += line(d, '#ffe4c4') + text(k ? X(t) : 222, top + 18, v, '#0ff');
    });
  } else if (i === 0) {
    out += bit(Array.from({ length: 60 }, (_, k) => 50 * (k + 1)), hi, lo);
  } else out += bit([100, 200], hi, lo);
});
out += line('M683 304V529', '#dc9a32', 2);
document.getElementById('wave').innerHTML = out;
</script>
</body>
</html>
